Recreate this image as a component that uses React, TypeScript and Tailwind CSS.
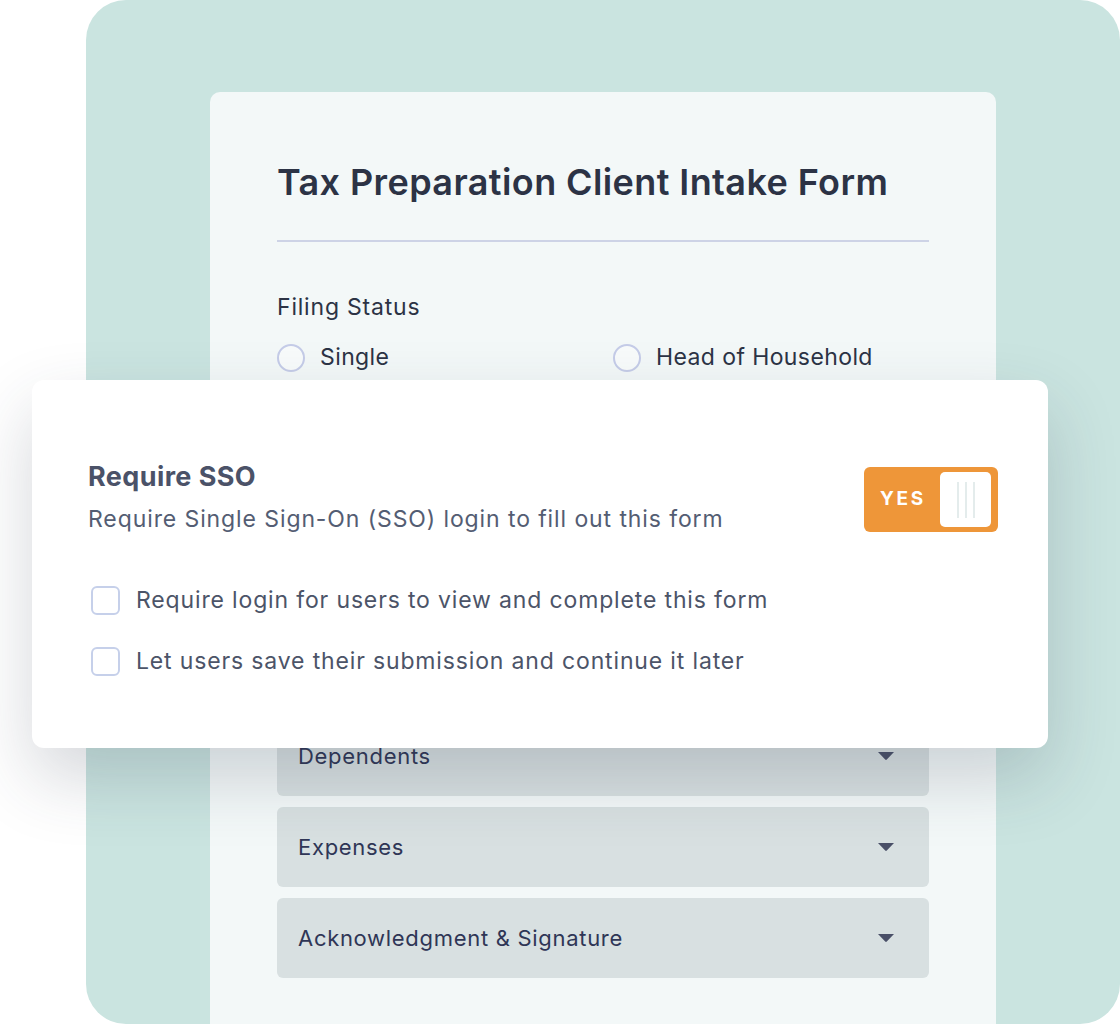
const font = { fontFamily: "Inter, 'Noto Sans', sans-serif" };

function Radio({ label }: { label: string }) {
  return (
    <div className="flex items-center gap-[15px]">
      <span className="w-[28px] h-[28px] rounded-full border-2 border-[#c5cce8] bg-white/40" />
      <span className="text-[23px] tracking-[0.4px] text-[#2c3345] leading-[29px]">{label}</span>
    </div>
  );
}

function Accordion({ label }: { label: string }) {
  return (
    <div className="h-[80px] rounded-md bg-[#d8e0e1] flex items-center justify-between pl-[21px] pr-[34px]">
      <span className="text-[22px] tracking-[0.7px] text-[#2f3656]">{label}</span>
      <svg width="18" height="10" viewBox="0 0 18 10" className="text-[#4a5068]">
        <path d="M1 1h16l-7.2 7.6a1.1 1.1 0 0 1-1.6 0z" fill="currentColor" />
      </svg>
    </div>
  );
}

function Checkbox({ label }: { label: string }) {
  return (
    <label className="flex items-center gap-[16px]">
      <span className="w-[29px] h-[29px] rounded-[6px] border-2 border-[#c6d0ea] bg-white" />
      <span className="text-[23px] tracking-[0.85px] text-[#4c5468] leading-[29px]">{label}</span>
    </label>
  );
}

export default function App() {
  return (
    <div className="relative w-[1120px] h-[1024px] overflow-hidden bg-white" style={font}>
      <div className="ml-[86px] h-[1024px] rounded-[40px] bg-[#cae4e0] pt-[92px] pl-[124px]">
        <div className="w-[786px] h-[932px] rounded-t-[10px] bg-[#f3f8f8] pl-[67px] pr-[67px] pt-[68px]">
          <h1 className="text-[36px] font-semibold text-[#2c3345] leading-[44px] tracking-[0.4px]">
            Tax Preparation Client Intake Form
          </h1>
          <div className="mt-[36px] h-[2px] bg-[#cdd3e6]" />
          <p className="mt-[50px] text-[23px] tracking-[0.8px] text-[#2c3345] leading-[30px]">Filing Status</p>
          <div className="mt-[21px] grid grid-cols-2 gap-y-[20px]">
            <Radio label="Single" />
            <div className="pl-[10px]">
              <Radio label="Head of Household" />
            </div>
            <Radio label="Married Filing Jointly" />
            <div className="pl-[10px]">
              <Radio label="Married Filing Separately" />
            </div>
          </div>
          <div className="mt-[266px] flex flex-col gap-[11px]">
            <Accordion label="Dependents" />
            <Accordion label="Expenses" />
            <Accordion label="Acknowledgment & Signature" />
          </div>
        </div>
      </div>

      <div className="absolute left-[32px] top-[380px] w-[1016px] h-[368px] rounded-[12px] bg-white shadow-[0_30px_70px_rgba(45,55,75,0.2)] px-[56px] pt-[80px]">
        <div className="flex items-start justify-between">
          <div>
            <h2 className="text-[27px] font-bold tracking-[0.4px] text-[#4b5268] leading-[34px]">Require SSO</h2>
            <p className="mt-[10px] text-[23px] tracking-[0.9px] text-[#545d73] leading-[30px]">
              Require Single Sign-On (SSO) login to fill out this form
            </p>
          </div>
          <button className="mt-[7px] mr-[-6px] w-[134px] h-[65px] rounded-[6px] bg-[#ee9639] flex items-center justify-between pl-[16px] pr-[7px]">
            <span className="text-white text-[19px] font-bold tracking-[2.6px]">YES</span>
            <span className="w-[51px] h-[55px] rounded-[5px] bg-white flex items-center justify-center gap-[6px]">
              <span className="w-[2px] h-[36px] bg-[#e4ecec]" />
              <span className="w-[2px] h-[36px] bg-[#e4ecec]" />
              <span className="w-[2px] h-[36px] bg-[#e4ecec]" />
            </span>
          </button>
        </div>
        <div className="mt-[52px] flex flex-col gap-[32px] pl-[3px]">
          <Checkbox label="Require login for users to view and complete this form" />
          <Checkbox label="Let users save their submission and continue it later" />
        </div>
      </div>
    </div>
  );
}
